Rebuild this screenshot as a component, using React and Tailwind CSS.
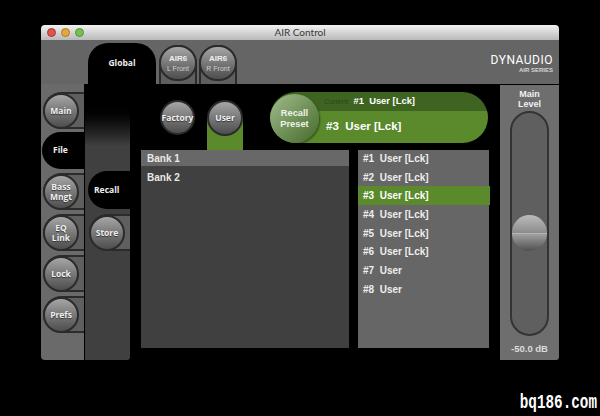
const sans = "font-['Liberation_Sans',Arial,sans-serif]";
const label = "font-['Open_Sans',sans-serif] font-bold text-[8.5px]";

const RoundButton = ({ children, size = "w-9 h-9" }) => (
    <div className={`${size} ${label} shrink-0 rounded-full border-2 border-[#2b2b2b] bg-linear-to-b from-[#a6a6a6] to-[#4e4e4e] flex flex-col items-center justify-center text-center leading-[10px] text-[#f0f0f0] [text-shadow:0_1px_1px_#333]`}>
        {children}
    </div>
);

const SideTab = ({ children }) => (
    <div className="h-[37px] rounded-l-[19px] border-2 border-r-0 border-[#2b2b2b] bg-[#5f5f5f] flex items-center">
        <div className="-ml-0.5">
            <RoundButton>{children}</RoundButton>
        </div>
    </div>
);

const HeaderTab = ({ name, sub }) => (
    <div className="w-[38px] h-[39px] mt-[5px] rounded-t-[19px] border-2 border-b-0 border-[#2b2b2b] bg-[#5f5f5f]">
        <div className="-mx-0.5 -mt-0.5">
            <div className="w-[38px] h-[36px] rounded-full border-2 border-[#2b2b2b] bg-linear-to-b from-[#a6a6a6] to-[#4e4e4e] flex flex-col items-center justify-center font-bold text-[8px] leading-[10px] text-[#f0f0f0]">
                <span>{name}</span>
                <span className="font-normal text-[7px] leading-[9px] text-[#d0d0d0]">{sub}</span>
            </div>
        </div>
    </div>
);

const presets = ["User [Lck]", "User [Lck]", "User [Lck]", "User [Lck]", "User [Lck]", "User [Lck]", "User", "User"];

const App = () => {
    return (
        <div className={`${sans} relative w-[600px] h-[416px] bg-black overflow-hidden pt-[25px] pl-[41px]`}>
            <div className="w-[518px] h-[335px] flex flex-col rounded-t-[4px] overflow-hidden">
                {/* title bar */}
                <div className="h-[15px] shrink-0 bg-linear-to-b from-[#f2f2f2] to-[#b9b9b9] flex items-center pl-[6px]">
                    <div className="flex gap-[5px]">
                        <div className="w-[9px] h-[9px] rounded-full bg-[#e0524c] border border-[#a33a36]"></div>
                        <div className="w-[9px] h-[9px] rounded-full bg-[#e3a73c] border border-[#a87a28]"></div>
                        <div className="w-[9px] h-[9px] rounded-full bg-[#76c051] border border-[#55903a]"></div>
                    </div>
                    <div className="flex-1 text-center text-[10px] text-[#3a3a3a] pr-[43px] font-['Lato',sans-serif]">AIR Control</div>
                </div>

                {/* header with tabs */}
                <div className="h-[44px] shrink-0 bg-[#656565] flex items-start pl-[47px]">
                    <div className={`w-[68px] h-[41px] mt-[3px] rounded-t-[20px] bg-black ${label} text-[#eeeeee] text-center pt-[14px]`}>Global</div>
                    <div className="ml-[3px] flex gap-[2px]">
                        <HeaderTab name="AIR6" sub="L Front" />
                        <HeaderTab name="AIR6" sub="R Front" />
                    </div>
                    <div className="ml-auto mr-[6px] mt-[14px] flex flex-col items-end text-white">
                        <span className="font-['Roboto',sans-serif] text-[12px] leading-[13px] tracking-[0.5px]">DYNAUDIO</span>
                        <span className="text-[6px] leading-[6px] font-bold text-[#d5d5d5]">AIR SERIES</span>
                    </div>
                </div>

                {/* body */}
                <div className="flex-1 flex bg-black min-h-0">
                    <div className="w-[43px] shrink-0 bg-[#6a6a6a] pt-[8px] pl-[2px] flex flex-col gap-[4px] rounded-bl-[4px]">
                        <SideTab>Main</SideTab>
                        <div className={`h-[37px] -mt-px -ml-px rounded-l-[19px] bg-black flex items-center pl-[11px] ${label} text-[#eeeeee]`}>File</div>
                        <SideTab>Bass<br />Mngt</SideTab>
                        <SideTab>EQ<br />Link</SideTab>
                        <SideTab>Lock</SideTab>
                        <SideTab>Prefs</SideTab>
                    </div>

                    <div className="w-[46px] shrink-0 border-l-[1px] border-black bg-linear-to-b from-black from-[18px] to-[#404040] to-[62px] pt-[87px] pl-[3px] flex flex-col gap-[5px] rounded-br-[3px]">
                        <div className={`h-[38px] rounded-l-[19px] bg-black flex items-center pl-[6px] ${label} text-[#eeeeee]`}>Recall</div>
                        <div className="h-[37px] ml-px rounded-l-[19px] border-2 border-r-0 border-[#2b2b2b] bg-[#5f5f5f] flex items-center">
                            <div className="-ml-0.5">
                                <RoundButton>Store</RoundButton>
                            </div>
                        </div>
                    </div>

                    <div className="flex-1 pl-[11px] flex flex-col">
                        <div className="h-[66px] shrink-0 flex">
                            <div className="ml-[19px] mt-[16px]">
                                <RoundButton size="w-[35px] h-[35px]">Factory</RoundButton>
                            </div>
                            <div className="ml-[12px] mt-[16px] w-[36px] bg-[linear-gradient(transparent_18px,#5a8a2c_18px)]">
                                <RoundButton size="w-[36px] h-[36px]">User</RoundButton>
                            </div>
                            <div className="ml-[27px] mt-[8px] w-[218px] h-[51px] rounded-full overflow-hidden relative flex flex-col">
                                <div className="h-[19px] bg-[#3f6321] pl-[54px] flex items-center">
                                    <span className="text-[#2c4a14] text-[7.5px] tracking-[-0.2px]">Current:</span>
                                    <span className="ml-[4px] text-[9.4px] font-bold text-white whitespace-pre">#1  User [Lck]</span>
                                </div>
                                <div className="flex-1 bg-[#5a8a2c] pl-[56px] flex items-center text-[11.5px] font-bold text-white whitespace-pre">#3  User [Lck]</div>
                                <div className="absolute left-0 bottom-0 w-[49px] h-[49px] rounded-full bg-linear-to-br from-[#a2bd8c] to-[#456a2b] flex items-center justify-center text-center text-[9.3px] leading-[11px] font-bold text-[#eef2e8] shadow-[1px_1px_2px_#2c4a14]">Recall<br />Preset</div>
                            </div>
                        </div>

                        <div className="flex gap-[9px]">
                            <div className="w-[208px] h-[198px] bg-[#404040] text-[10px] font-bold text-[#e8e8e8]">
                                <div className="h-[16px] bg-[#686868] flex items-center pl-[6px] mb-[3px]">Bank 1</div>
                                <div className="h-[16px] flex items-center pl-[6px]">Bank 2</div>
                            </div>
                            <div className="w-[131px] h-[198px] bg-[#666666] text-[10px] font-bold text-[#eeeeee]">
                                <div className="flex flex-col -mt-px">
                                    {presets.map((name, i) => (
                                        <div
                                            key={i}
                                            className={`h-[18.7px] flex items-center pl-[5px] whitespace-pre ${i === 2 ? "bg-[#5a8a2c] text-white -mr-px" : ""}`}
                                        >
                                            {`#${i + 1}  ${name}`}
                                        </div>
                                    ))}
                                </div>
                            </div>
                        </div>
                    </div>

                    <div className="w-[59px] shrink-0 mt-px bg-[#6e6e6e] flex flex-col items-center rounded-br-[3px]">
                        <div className="text-[9px] leading-[10px] font-bold text-[#f0f0f0] text-center mt-[4px]">Main<br />Level</div>
                        <div className="mt-[2px] w-[39px] h-[225px] rounded-full border-2 border-[#333333] bg-[#5f5f5f] flex justify-center items-start pt-[102px]">
                            <div className="w-[35px] h-[36px] rounded-full bg-[linear-gradient(#bcbcbc,#8c8c8c_49%,#d0d0d0_49%,#a0a0a0_53%,#505050)] shrink-0"></div>
                        </div>
                        <div className="mt-[6px] text-[9.5px] font-bold text-[#dddddd]">-50.0 dB</div>
                    </div>
                </div>
            </div>

            <div className="absolute right-[3px] bottom-[5px] font-['Liberation_Mono',monospace] font-bold text-[14.3px] leading-[16px] text-white scale-y-[1.35]">bq186.com</div>
        </div>
    );
};

export default App;
